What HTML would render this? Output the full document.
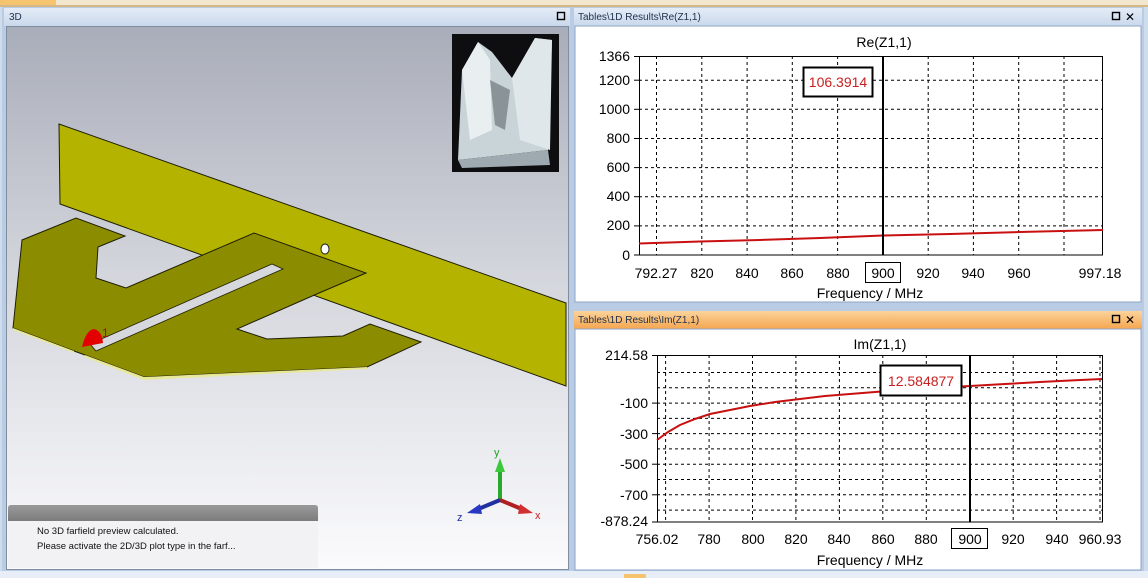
<!DOCTYPE html>
<html><head><meta charset="utf-8"><style>
html,body{margin:0;padding:0;width:1148px;height:578px;overflow:hidden;background:#cfdcec}
svg{display:block}
text{font-family:"Liberation Sans",sans-serif}
</style></head><body>
<svg width="1148" height="578" viewBox="0 0 1148 578" xmlns="http://www.w3.org/2000/svg">
<defs>
<linearGradient id="tb" x1="0" y1="0" x2="0" y2="1"><stop offset="0" stop-color="#e4ecf7"/><stop offset="1" stop-color="#c9d8ec"/></linearGradient>
<linearGradient id="tbo" x1="0" y1="0" x2="0" y2="1"><stop offset="0" stop-color="#fbd39a"/><stop offset="1" stop-color="#f5a650"/></linearGradient>
<linearGradient id="bg3" x1="0" y1="0" x2="0" y2="1"><stop offset="0" stop-color="#a9adb9"/><stop offset="0.45" stop-color="#d3d5dc"/><stop offset="1" stop-color="#fbfbfd"/></linearGradient>
<linearGradient id="mh" x1="0" y1="0" x2="0" y2="1"><stop offset="0" stop-color="#9a9a9a"/><stop offset="1" stop-color="#7c7c7c"/></linearGradient>
</defs>
<!-- top strip -->
<rect x="0" y="0" width="1148" height="6" fill="#f3e6cf"/>
<rect x="0" y="0" width="56" height="5" fill="#f6c36e"/>
<rect x="0" y="5" width="1148" height="2" fill="#d6b884"/>
<!-- 3D panel -->
<rect x="2" y="7" width="570" height="564" fill="#b9cce4"/>
<rect x="4" y="8" width="566" height="18" fill="url(#tb)"/>
<text x="9" y="20" font-size="10" fill="#20324e">3D</text>
<rect x="557.5" y="12.5" width="7" height="7" fill="none" stroke="#000" stroke-width="1.4"/>
<rect x="6" y="26" width="563" height="544" fill="#7f8e9e"/>
<rect x="7" y="27" width="561" height="542" fill="url(#bg3)"/>
<!-- thumbnail -->
<rect x="452" y="34" width="107" height="138" fill="#0e0e10"/>
<path d="M462 70 L478 42 L492 52 L512 78 L535 38 L552 40 L548 150 L458 160 Z" fill="#c9d4d8"/>
<path d="M462 70 L478 42 L490 60 L492 130 L470 140 Z" fill="#e9eef0"/>
<path d="M512 78 L535 38 L552 40 L550 150 L520 140 Z" fill="#dfe7ea"/>
<path d="M490 80 L510 90 L505 130 L495 125 Z" fill="#8a9498"/>
<path d="M458 160 L548 150 L550 165 L462 168 Z" fill="#9eaab0"/>
<!-- plate -->
<polygon points="59,124 566,303 566,386 60,204" fill="#b4b400" stroke="#1e1e00" stroke-width="1"/>
<!-- lower shape -->
<polygon points="22,240 76,218 125,236 98,247 96,278 126,288 254,233 366,273 319,293 237,329 267,339 343,336 370,324 421,342 367,367 144,377 85,355 74,351 13,328" fill="#8c8c00" stroke="#1e1e00" stroke-width="1"/>
<polygon points="85,355 144,377 367,367 367,369 144,380 84,357" fill="#e8e89a"/>
<polygon points="13,328 74,351 74,353 13,330" fill="#e8e89a"/>
<polygon points="90,344 272,264 283,269 96,351" fill="#d6d8de" stroke="#1e1e00" stroke-width="0.8"/>
<ellipse cx="325" cy="249" rx="4" ry="5" fill="#fff" stroke="#222" stroke-width="1"/>
<path d="M82 347 Q86 330 94 329 Q102 331 103 343 Z" fill="#e20000"/>
<text x="102" y="337" font-size="12" fill="#a01010">1</text>
<!-- triad -->
<line x1="500" y1="500" x2="500" y2="470" stroke="#2aa82a" stroke-width="4"/>
<polygon points="495,472 500,458 505,472" fill="#3ec83e"/>
<text x="494" y="456" font-size="11" fill="#20a020">y</text>
<line x1="500" y1="500" x2="524" y2="510" stroke="#b02020" stroke-width="4"/>
<polygon points="520,504 533,513 518,514" fill="#d03030"/>
<text x="535" y="519" font-size="11" fill="#d02020">x</text>
<line x1="500" y1="500" x2="476" y2="510" stroke="#2030a0" stroke-width="4"/>
<polygon points="480,504 467,513 482,514" fill="#2838c0"/>
<text x="457" y="521" font-size="11" fill="#2030a0">z</text>
<!-- message box -->
<path d="M8 521 L8 508 Q8 505 11 505 L315 505 Q318 505 318 508 L318 521 Z" fill="url(#mh)"/>
<rect x="8" y="521" width="310" height="47" fill="#f2f2f4"/>
<text x="37" y="534" font-size="9.5" fill="#111">No 3D farfield preview calculated.</text>
<text x="37" y="549" font-size="9.5" fill="#111">Please activate the 2D/3D plot type in the farf...</text>
<!-- right panels frame -->
<rect x="572" y="7" width="572" height="564" fill="#b9cce4"/>
<!-- Re panel -->
<rect x="574" y="8" width="568" height="18" fill="url(#tb)"/>
<text x="578" y="20" font-size="10" fill="#20324e">Tables\1D Results\Re(Z1,1)</text>
<rect x="1112.5" y="12.5" width="7" height="7" fill="none" stroke="#000" stroke-width="1.4"/>
<text x="1125" y="21" font-size="12" fill="#000">✕</text>
<rect x="575" y="26" width="566" height="276" fill="#fff" stroke="#8ea6c6"/>
<text x="884" y="47" font-size="14" text-anchor="middle" fill="#000">Re(Z1,1)</text>
<g stroke="#000" stroke-width="1" stroke-dasharray="3,3">
<line x1="656.5" y1="56" x2="656.5" y2="255"/><line x1="701.8" y1="56" x2="701.8" y2="255"/><line x1="747.1" y1="56" x2="747.1" y2="255"/><line x1="792.3" y1="56" x2="792.3" y2="255"/><line x1="837.6" y1="56" x2="837.6" y2="255"/><line x1="928.2" y1="56" x2="928.2" y2="255"/><line x1="973.4" y1="56" x2="973.4" y2="255"/><line x1="1018.7" y1="56" x2="1018.7" y2="255"/><line x1="1064" y1="56" x2="1064" y2="255"/>
<line x1="639" y1="225.9" x2="1103" y2="225.9"/><line x1="639" y1="196.7" x2="1103" y2="196.7"/><line x1="639" y1="167.6" x2="1103" y2="167.6"/><line x1="639" y1="138.5" x2="1103" y2="138.5"/><line x1="639" y1="109.3" x2="1103" y2="109.3"/><line x1="639" y1="80.2" x2="1103" y2="80.2"/>
</g>
<rect x="639.5" y="56.5" width="463" height="198.5" fill="none" stroke="#000"/>
<g stroke="#000"><line x1="634" y1="56.5" x2="639" y2="56.5"/><line x1="634" y1="80.2" x2="639" y2="80.2"/><line x1="634" y1="109.3" x2="639" y2="109.3"/><line x1="634" y1="138.5" x2="639" y2="138.5"/><line x1="634" y1="167.6" x2="639" y2="167.6"/><line x1="634" y1="196.7" x2="639" y2="196.7"/><line x1="634" y1="225.9" x2="639" y2="225.9"/><line x1="634" y1="255" x2="639" y2="255"/></g>
<polyline points="639,243.5 700,241.5 760,240 820,238 883,235.5 950,234 1020,232 1103,230" fill="none" stroke="#c81010" stroke-width="2"/>
<line x1="883" y1="56" x2="883" y2="255" stroke="#000" stroke-width="2"/>
<rect x="803.5" y="67.5" width="69" height="29" fill="#fff" stroke="#000" stroke-width="2"/>
<text x="838" y="87" font-size="14" text-anchor="middle" fill="#c82020">106.3914</text>
<g font-size="14" fill="#000" text-anchor="end">
<text x="630" y="61">1366</text><text x="630" y="85">1200</text><text x="630" y="114">1000</text><text x="630" y="143">800</text><text x="630" y="172">600</text><text x="630" y="201">400</text><text x="630" y="230">200</text><text x="630" y="260">0</text>
</g>
<g font-size="14" fill="#000" text-anchor="middle">
<text x="656" y="278">792.27</text><text x="702" y="278">820</text><text x="747" y="278">840</text><text x="792" y="278">860</text><text x="838" y="278">880</text><text x="883" y="278">900</text><text x="928" y="278">920</text><text x="973" y="278">940</text><text x="1019" y="278">960</text><text x="1100" y="278">997.18</text>
<text x="870" y="298">Frequency / MHz</text>
</g>
<rect x="865.5" y="262.5" width="35" height="20" fill="none" stroke="#000"/>
<!-- Im panel -->
<rect x="574" y="311" width="568" height="18" fill="url(#tbo)"/>
<text x="578" y="323" font-size="10" fill="#20324e">Tables\1D Results\Im(Z1,1)</text>
<rect x="1112.5" y="315.5" width="7" height="7" fill="none" stroke="#000" stroke-width="1.4"/>
<text x="1125" y="324" font-size="12" fill="#000">✕</text>
<rect x="575" y="329" width="566" height="241" fill="#fff" stroke="#8ea6c6"/>
<text x="880" y="349" font-size="14" text-anchor="middle" fill="#000">Im(Z1,1)</text>
<g stroke="#000" stroke-width="1" stroke-dasharray="3,3">
<line x1="665.6" y1="355" x2="665.6" y2="522"/><line x1="709.1" y1="355" x2="709.1" y2="522"/><line x1="752.5" y1="355" x2="752.5" y2="522"/><line x1="795.9" y1="355" x2="795.9" y2="522"/><line x1="839.4" y1="355" x2="839.4" y2="522"/><line x1="882.8" y1="355" x2="882.8" y2="522"/><line x1="926.3" y1="355" x2="926.3" y2="522"/><line x1="1013.2" y1="355" x2="1013.2" y2="522"/><line x1="1056.6" y1="355" x2="1056.6" y2="522"/><line x1="1100" y1="355" x2="1100" y2="522"/>
<line x1="657" y1="372.5" x2="1102" y2="372.5"/><line x1="657" y1="387.8" x2="1102" y2="387.8"/><line x1="657" y1="403.1" x2="1102" y2="403.1"/><line x1="657" y1="418.4" x2="1102" y2="418.4"/><line x1="657" y1="433.6" x2="1102" y2="433.6"/><line x1="657" y1="448.9" x2="1102" y2="448.9"/><line x1="657" y1="464.2" x2="1102" y2="464.2"/><line x1="657" y1="479.5" x2="1102" y2="479.5"/><line x1="657" y1="494.8" x2="1102" y2="494.8"/><line x1="657" y1="510.1" x2="1102" y2="510.1"/>
</g>
<rect x="657.5" y="355.5" width="445" height="166.5" fill="none" stroke="#000"/>
<g stroke="#000"><line x1="652" y1="355.5" x2="657" y2="355.5"/><line x1="652" y1="403.1" x2="657" y2="403.1"/><line x1="652" y1="433.6" x2="657" y2="433.6"/><line x1="652" y1="464.2" x2="657" y2="464.2"/><line x1="652" y1="494.8" x2="657" y2="494.8"/><line x1="652" y1="522" x2="657" y2="522"/></g>
<polyline points="657,440 668,432 680,425 695,419 710,414 730,410 750,406 775,402 800,399 825,396 850,394 875,392 900,390 935,388 970,386 1005,384 1040,382 1070,380.5 1102,379" fill="none" stroke="#c81010" stroke-width="2"/>
<line x1="970" y1="355" x2="970" y2="522" stroke="#000" stroke-width="2"/>
<rect x="880.5" y="365.5" width="81" height="30" fill="#fff" stroke="#000" stroke-width="2"/>
<text x="921" y="386" font-size="14" text-anchor="middle" fill="#c82020">12.584877</text>
<g font-size="14" fill="#000" text-anchor="end">
<text x="648" y="360">214.58</text><text x="648" y="408">-100</text><text x="648" y="439">-300</text><text x="648" y="469">-500</text><text x="648" y="500">-700</text><text x="648" y="526">-878.24</text>
</g>
<g font-size="14" fill="#000" text-anchor="middle">
<text x="657" y="544">756.02</text><text x="709" y="544">780</text><text x="753" y="544">800</text><text x="796" y="544">820</text><text x="839" y="544">840</text><text x="883" y="544">860</text><text x="926" y="544">880</text><text x="970" y="544">900</text><text x="1013" y="544">920</text><text x="1057" y="544">940</text><text x="1100" y="544">960.93</text>
<text x="870" y="565">Frequency / MHz</text>
</g>
<rect x="951.5" y="528.5" width="36" height="20" fill="none" stroke="#000"/>
<!-- bottom strip -->
<rect x="0" y="571" width="1148" height="7" fill="#e7eef7"/>
<rect x="624" y="574" width="22" height="4" fill="#f6c36e"/>
</svg>
</body></html>
